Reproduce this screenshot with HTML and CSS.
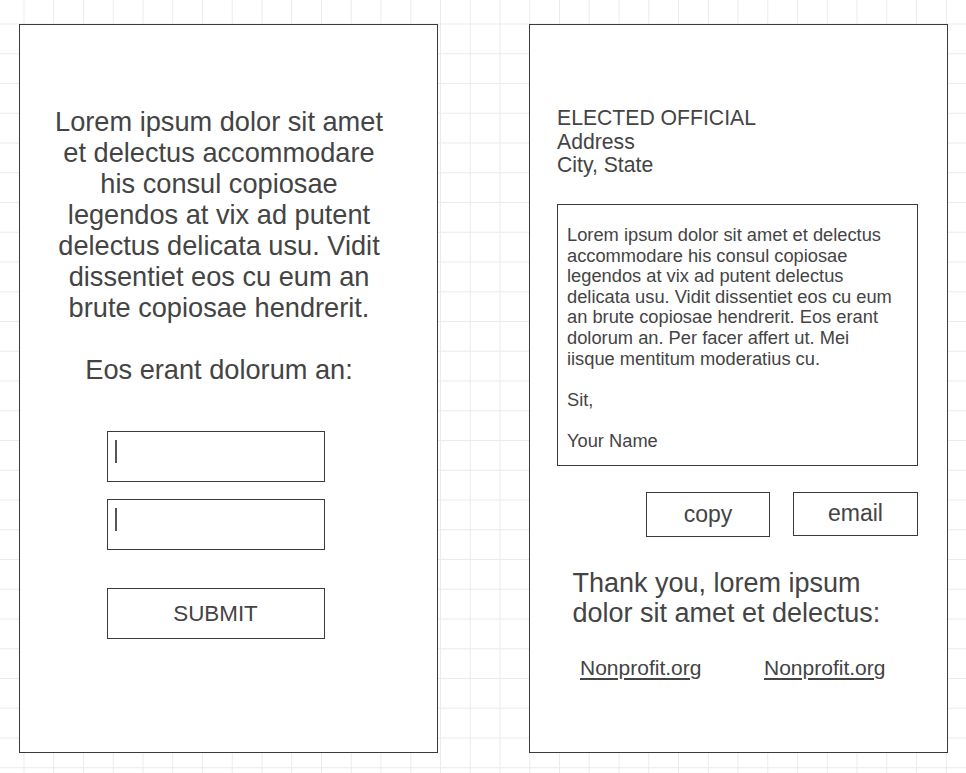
FILE: index.html
```html
<!DOCTYPE html>
<html lang="en">
<head>
<meta charset="utf-8">
<title>Letter wireframe</title>
<link rel="stylesheet" href="styles.css">
</head>
<body>
<div class="canvas">
  <section class="panel panel-form">
    <div class="form-col">
      <p class="intro">Lorem ipsum dolor sit amet et delectus accommodare his consul copiosae legendos at vix ad putent delectus delicata usu. Vidit dissentiet eos cu eum an brute copiosae hendrerit.<br><br>Eos erant dolorum an:</p>
      <div class="field"><span class="caret"></span></div>
      <div class="field"><span class="caret"></span></div>
      <button class="submit" type="button">SUBMIT</button>
    </div>
  </section>
  <section class="panel panel-letter">
    <address class="recipient">ELECTED OFFICIAL<br>Address<br>City, State</address>
    <div class="letter">
      <p>Lorem ipsum dolor sit amet et delectus accommodare his consul copiosae legendos at vix ad putent delectus delicata usu. Vidit dissentiet eos cu eum an brute copiosae hendrerit. Eos erant dolorum an. Per facer affert ut. Mei iisque mentitum moderatius cu.<br><br>Sit,<br><br>Your Name</p>
    </div>
    <div class="actions">
      <button class="btn btn-copy" type="button">copy</button>
      <button class="btn btn-email" type="button">email</button>
    </div>
    <p class="thanks">Thank you, lorem ipsum dolor sit amet et delectus:</p>
    <div class="links">
      <a href="#">Nonprofit.org</a>
      <a href="#">Nonprofit.org</a>
    </div>
  </section>
</div>
</body>
</html>
```

FILE: styles.css
```css
html, body {
  margin: 0;
  height: 100%;
}

body {
  background-color: #ffffff;
  background-image:
    linear-gradient(to right, #ebebeb 1px, transparent 1px),
    linear-gradient(to bottom, #ebebeb 1px, transparent 1px);
  background-size: 29.75px 29.75px;
  background-position: 23.5px 23.5px;
  font-family: "Liberation Sans", Arial, sans-serif;
  color: #444444;
  overflow: hidden;
}

.canvas {
  display: flex;
  gap: 91px;
  padding: 24px 0 0 19px;
}

.panel {
  box-sizing: border-box;
  width: 419px;
  height: 729px;
  border: 1px solid #3a3a3a;
  background: #ffffff;
}

/* Left panel: form */
.panel-form {
  padding: 81px 0 0 29px;
}

.form-col {
  width: 340px;
  display: flex;
  flex-direction: column;
  align-items: center;
}

.intro {
  margin: 0;
  width: 100%;
  font-size: 27.2px;
  line-height: 31.05px;
  text-align: center;
}

.field {
  box-sizing: border-box;
  width: 218px;
  height: 51px;
  margin: 46px 7px 0 0;
  padding: 8px 0 0 7px;
  border: 1px solid #3a3a3a;
  background: #ffffff;
}

.field + .field {
  margin-top: 17px;
}

.caret {
  display: block;
  width: 2px;
  height: 23px;
  background: #555555;
}

.submit {
  box-sizing: border-box;
  width: 218px;
  height: 51px;
  margin: 38px 7px 0 0;
  padding: 0;
  border: 1px solid #3a3a3a;
  background: #ffffff;
  font-family: "Liberation Sans", Arial, sans-serif;
  font-size: 22.4px;
  color: #444444;
}

/* Right panel: letter */
.panel-letter {
  padding: 81px 29px 0 27px;
}

.recipient {
  font-style: normal;
  font-size: 21.2px;
  line-height: 23.7px;
}

.letter {
  margin-top: 27px;
  padding: 20px 0 13px 9px;
  border: 1px solid #3a3a3a;
}

.letter p {
  margin: 0;
  width: 330px;
  font-size: 18.3px;
  line-height: 20.6px;
}

.actions {
  display: flex;
  justify-content: flex-end;
  align-items: flex-start;
  gap: 23px;
  margin-top: 26px;
}

.btn {
  box-sizing: border-box;
  width: 124px;
  height: 45px;
  padding: 0;
  border: 1px solid #3a3a3a;
  background: #ffffff;
  font-family: "Liberation Sans", Arial, sans-serif;
  font-size: 23px;
  color: #444444;
}

.btn-email {
  width: 125px;
  height: 44px;
}

.thanks {
  margin: 31px 0 0 15.5px;
  width: 330px;
  font-size: 27px;
  line-height: 30.7px;
}

.links {
  display: flex;
  gap: 62.6px;
  margin-top: 27px;
  padding-left: 23px;
  font-size: 21px;
}

.links a {
  color: #444444;
  text-decoration: underline;
  text-underline-offset: 3px;
}
```
